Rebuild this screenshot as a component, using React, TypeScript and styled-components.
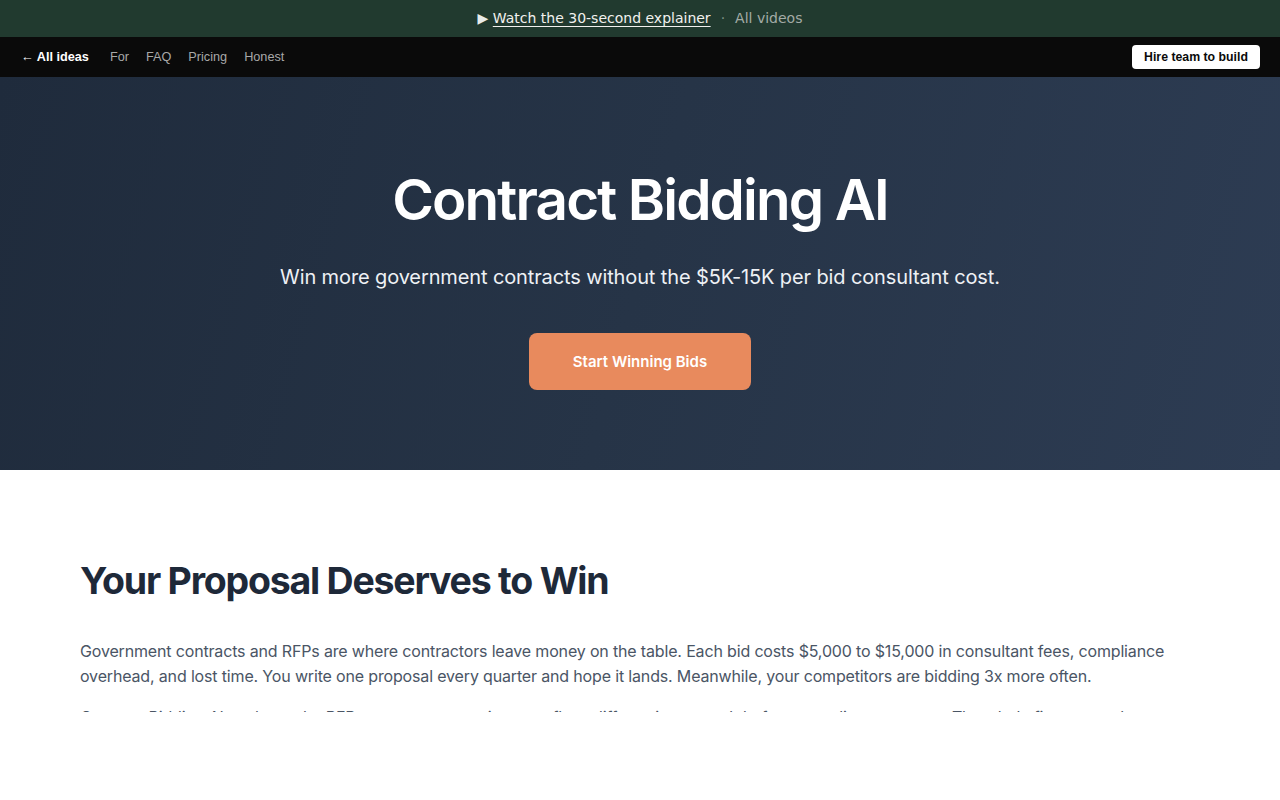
import React from "react";
import styled, { createGlobalStyle } from "styled-components";

const GlobalStyle = createGlobalStyle`
  html, body { margin: 0; padding: 0; background: #ffffff; }
  body { font-family: "Inter", "Liberation Sans", sans-serif; }
  * { box-sizing: border-box; }
`;

const Banner = styled.div`
  height: 37px;
  background: #213a2f;
  display: flex;
  align-items: center;
  justify-content: center;
  gap: 8px;
  padding-bottom: 1px;
  font-family: "DejaVu Sans", sans-serif;
  font-size: 14px;
  color: #e8ece9;
`;

const BannerLink = styled.a`
  color: #f1f1ee;
  text-decoration: underline;
  text-underline-offset: 3px;
`;

const Dot = styled.span`
  color: #7f8f86;
  margin: 0 2px;
`;

const Muted = styled.span`
  color: #a3aba6;
`;

const Nav = styled.nav`
  height: 40px;
  background: #0a0a0a;
  display: flex;
  align-items: center;
  padding: 0 20px 0 21px;
  font-family: "Liberation Sans", Arial, sans-serif;
  font-size: 12.7px;
`;

const NavLinks = styled.div`
  display: flex;
  align-items: center;
  gap: 17px;
  flex: 1;
`;

const BackLink = styled.a`
  color: #ffffff;
  font-weight: 700;
  margin-right: 4px;
`;

const NavLink = styled.a`
  color: #a8a8a8;
`;

const HireButton = styled.button`
  background: #ffffff;
  color: #0a0a0a;
  border: none;
  border-radius: 4px;
  padding: 0;
  width: 128px;
  height: 24px;
  white-space: nowrap;
  font-family: "Liberation Sans", Arial, sans-serif;
  font-size: 12.3px;
  font-weight: 700;
`;

const Hero = styled.header`
  height: 393px;
  background: linear-gradient(105deg, #1f2b3c 0%, #263447 50%, #2d3c53 100%);
  display: flex;
  flex-direction: column;
  align-items: center;
  padding-top: 93px;
  color: #ffffff;
`;

const Title = styled.h1`
  margin: 0;
  font-family: "Inter", sans-serif;
  font-size: 56.6px;
  font-weight: 600;
  letter-spacing: -0.033em;
  line-height: 60px;
`;

const Subtitle = styled.p`
  margin: 35px 0 0;
  font-family: "Inter", sans-serif;
  font-size: 20px;
  letter-spacing: -0.006em;
  color: #eef1f5;
`;

const Cta = styled.button`
  margin-top: 44px;
  width: 222px;
  height: 57px;
  background: #e88a5d;
  color: #ffffff;
  border: none;
  border-radius: 8px;
  font-family: "Inter", sans-serif;
  font-size: 15px;
  font-weight: 600;
`;

const Section = styled.section`
  padding: 88px 80px 0;
  max-width: 1280px;
`;

const Heading = styled.h2`
  margin: 0;
  font-family: "Inter", sans-serif;
  font-size: 37.5px;
  font-weight: 700;
  letter-spacing: -0.033em;
  line-height: 46px;
  color: #1e2939;
`;

const Para = styled.p`
  margin: 35px 0 0;
  font-family: "Inter", sans-serif;
  font-size: 16px;
  line-height: 25px;
  color: #4a5565;
  letter-spacing: -0.01em;
  & + & {
    margin-top: 16px;
  }
`;

/* white strip pinned to the bottom of the viewport, over the page text */
const BottomCover = styled.div`
  position: fixed;
  left: 0;
  right: 0;
  bottom: 0;
  height: 88px;
  background: #ffffff;
`;

export default function App() {
  return (
    <>
      <GlobalStyle />
      <Banner>
        <span>
          ▶ <BannerLink>Watch the 30-second explainer</BannerLink>
        </span>
        <Dot>·</Dot>
        <Muted>All videos</Muted>
      </Banner>
      <Nav>
        <NavLinks>
          <BackLink>← All ideas</BackLink>
          <NavLink>For</NavLink>
          <NavLink>FAQ</NavLink>
          <NavLink>Pricing</NavLink>
          <NavLink>Honest</NavLink>
        </NavLinks>
        <HireButton>Hire team to build</HireButton>
      </Nav>
      <Hero>
        <Title>Contract Bidding AI</Title>
        <Subtitle>Win more government contracts without the $5K-15K per bid consultant cost.</Subtitle>
        <Cta>Start Winning Bids</Cta>
      </Hero>
      <Section>
        <Heading>Your Proposal Deserves to Win</Heading>
        <Para>
          Government contracts and RFPs are where contractors leave money on the table. Each bid costs $5,000 to
          $15,000 in consultant fees, compliance overhead, and lost time. You write one proposal every quarter and
          hope it lands. Meanwhile, your competitors are bidding 3x more often.
        </Para>
        <Para>
          Contract Bidding AI analyzes the RFP, maps every requirement, flags differentiators, and drafts a compliant
          response. The whole first pass takes minutes instead of weeks, so your team can bid on more work.
        </Para>
      </Section>
      <BottomCover />
    </>
  );
}
